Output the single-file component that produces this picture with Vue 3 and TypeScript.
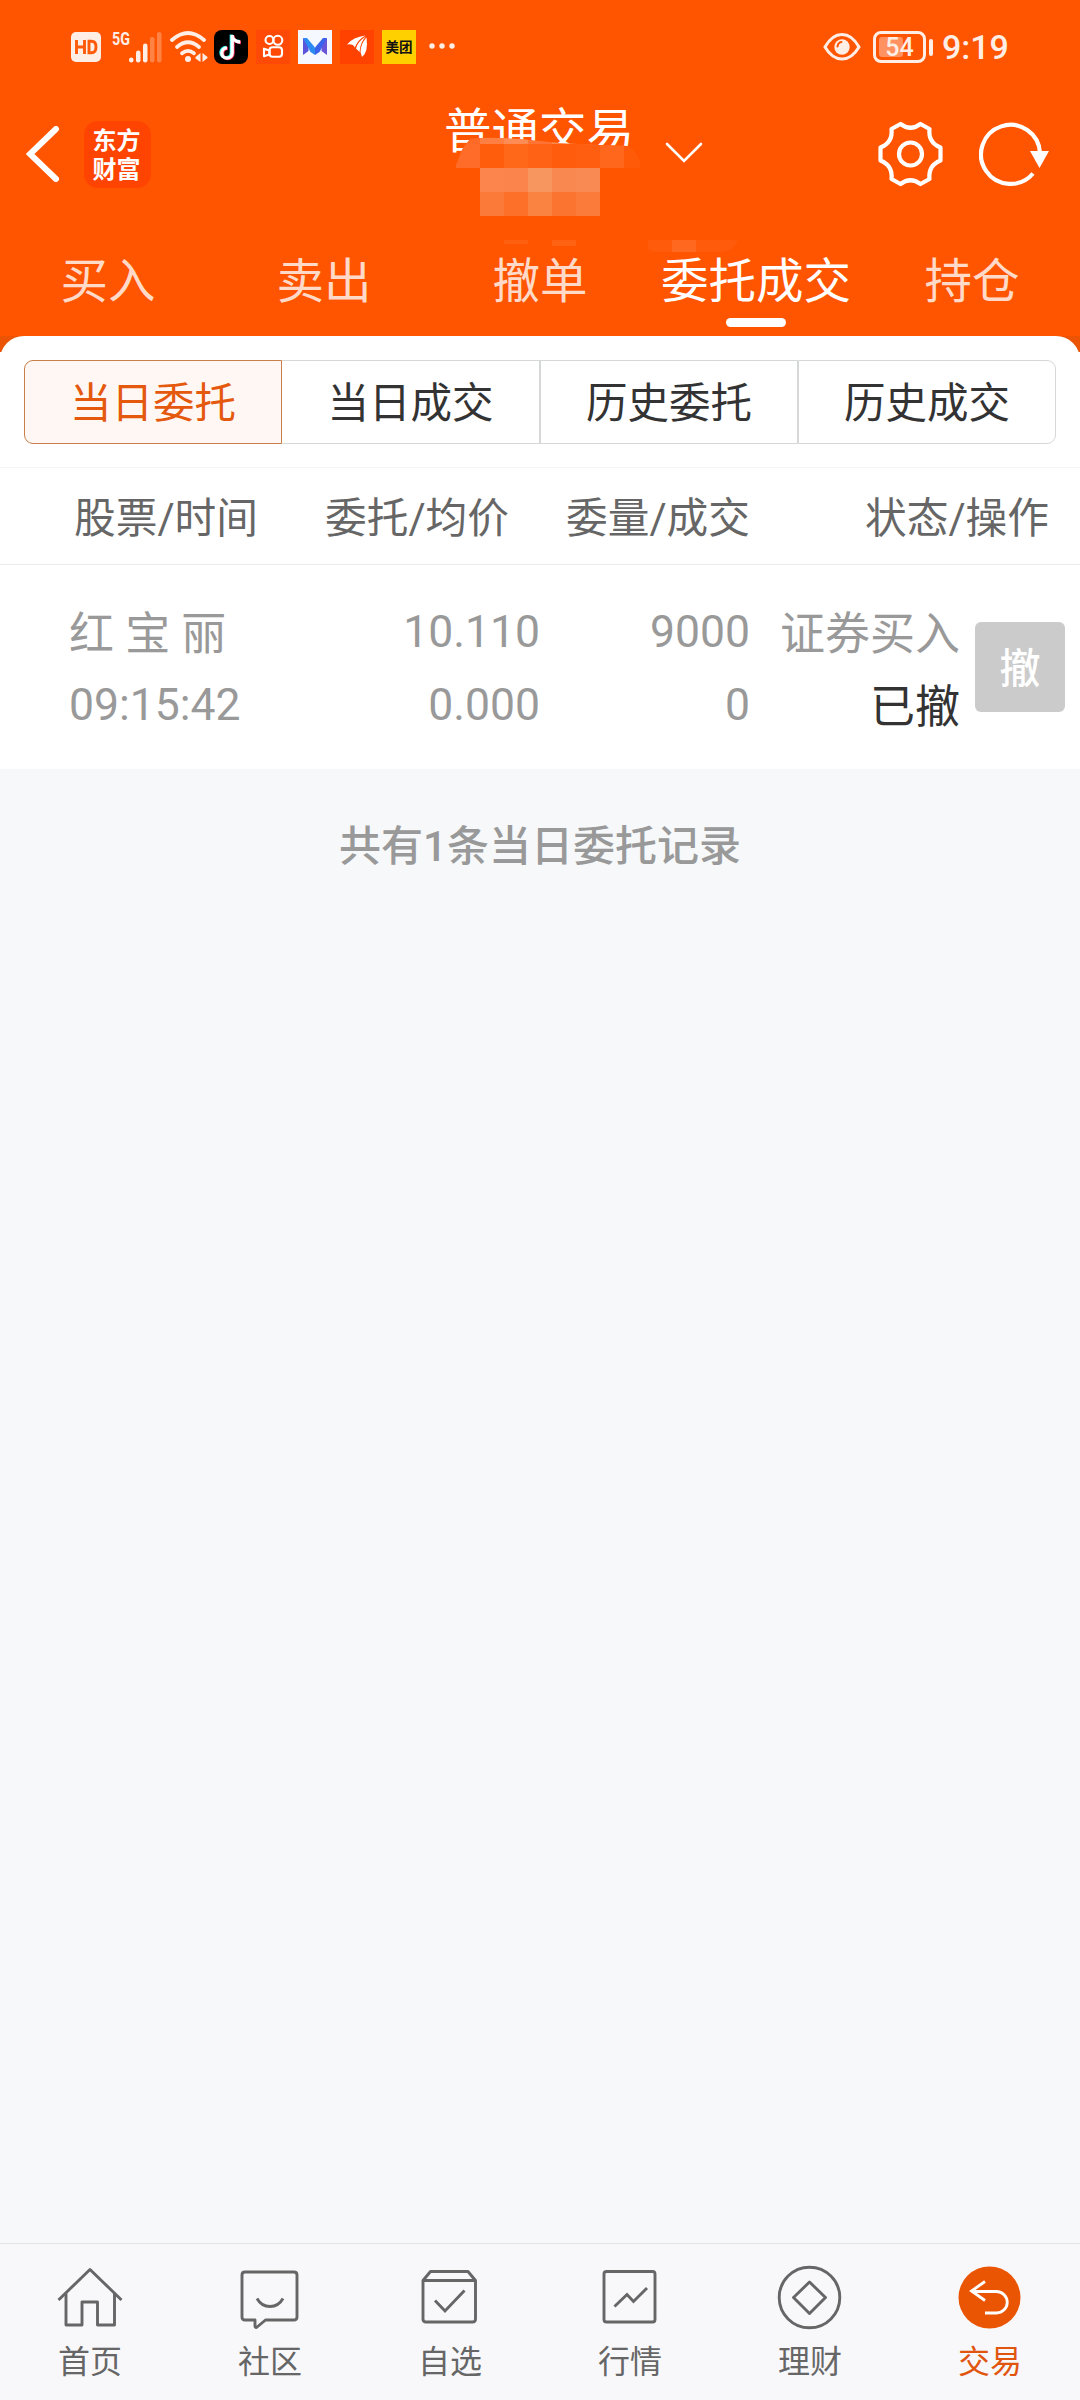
<script setup lang="ts">
import { ref } from 'vue'

interface Order {
  name: string
  time: string
  price: string
  avg: string
  amount: string
  filled: string
  kind: string
  status: string
}

interface Cell {
  x: number
  y: number
  w: number
  h: number
  c: string
}

const tabs: string[] = ['买入', '卖出', '撤单', '委托成交', '持仓']
const activeTab = ref<number>(3)

const segments: string[] = ['当日委托', '当日成交', '历史委托', '历史成交']
const activeSegment = ref<number>(0)

const orders: Order[] = [
  {
    name: '红 宝 丽',
    time: '09:15:42',
    price: '10.110',
    avg: '0.000',
    amount: '9000',
    filled: '0',
    kind: '证券买入',
    status: '已撤',
  },
]

const navItems: string[] = ['首页', '社区', '自选', '行情', '理财', '交易']
const activeNav = ref<number>(5)

// Mosaic that hides the account number under the title
const veil: Cell[] = [
  { x: 16, y: 0, w: 24, h: 24, c: '#ff6a26' },
  { x: 40, y: 0, w: 24, h: 24, c: '#ff7f42' },
  { x: 64, y: 0, w: 24, h: 24, c: '#ff8b55' },
  { x: 88, y: 0, w: 24, h: 24, c: '#ff7434' },
  { x: 112, y: 0, w: 24, h: 24, c: '#ff8a50' },
  { x: 136, y: 0, w: 24, h: 24, c: '#ff7636' },
  { x: 160, y: 0, w: 48, h: 24, c: '#ff6a20' },
  { x: 16, y: 8, w: 24, h: 24, c: '#ff6c29' },
  { x: 40, y: 8, w: 24, h: 24, c: '#ff5c0c' },
  { x: 64, y: 8, w: 24, h: 24, c: '#ff6719' },
  { x: 88, y: 8, w: 24, h: 24, c: '#ff6214' },
  { x: 112, y: 8, w: 24, h: 24, c: '#ff5c0d' },
  { x: 136, y: 8, w: 24, h: 24, c: '#ff5e10' },
  { x: 160, y: 8, w: 24, h: 24, c: '#ff671c' },
  { x: 184, y: 8, w: 24, h: 24, c: '#ff5a08' },
]
const blocks: Cell[] = [
  { x: 40, y: 32, w: 24, h: 24, c: '#fb854c' },
  { x: 64, y: 32, w: 24, h: 24, c: '#fa844c' },
  { x: 88, y: 32, w: 24, h: 24, c: '#f7965f' },
  { x: 112, y: 32, w: 24, h: 24, c: '#f98850' },
  { x: 136, y: 32, w: 24, h: 24, c: '#fa8a54' },
  { x: 40, y: 56, w: 24, h: 24, c: '#fb7a3a' },
  { x: 64, y: 56, w: 24, h: 24, c: '#fc7029' },
  { x: 88, y: 56, w: 24, h: 24, c: '#fb8342' },
  { x: 112, y: 56, w: 24, h: 24, c: '#fc7530' },
  { x: 136, y: 56, w: 24, h: 24, c: '#fb7b3a' },
  { x: 64, y: 104, w: 24, h: 4, c: '#ff6010' },
  { x: 112, y: 104, w: 24, h: 6, c: '#ff6212' },
]
</script>

<template>
  <div class="page">
    <header class="head">
      <div class="status">
        <div class="status-left">
          <svg class="hd" width="30" height="30" viewBox="0 0 30 30">
            <rect width="30" height="30" rx="5" fill="#ffeee6" />
            <path d="M5.500 8v14M13.500 8v14M5.500 15h8M18 9.200v11.600h2.500q4.500 0 4.500-5.800t-4.500-5.800z" fill="none" stroke="#ff5a0a" stroke-width="2.900" />
          </svg>
          <div class="net">
            <span class="gen">5G</span>
            <svg width="34" height="32" viewBox="0 0 34 32">
              <g fill="#ffeee6">
                <rect x="1" y="26.500" width="4.500" height="5" rx="2.200" />
                <rect x="8" y="19.500" width="4.500" height="12" rx="2.200" />
                <rect x="15" y="12.500" width="4.500" height="19" rx="2.200" />
                <rect x="22" y="6" width="4.500" height="25.500" rx="2.200" opacity=".3" />
                <rect x="29" y="1" width="4.500" height="30.500" rx="2.200" opacity=".3" />
              </g>
            </svg>
          </div>
          <svg class="wifi" width="38" height="32" viewBox="0 0 38 32">
            <g fill="none" stroke="#ffeee6" stroke-width="3.800" stroke-linecap="round">
              <path d="M2 9Q18 -5 34 9" />
              <path d="M7 16Q18 6.500 29 16" />
              <path d="M12 22.300Q18 17.500 24 22.300" />
            </g>
            <circle cx="18" cy="28" r="3" fill="#ffeee6" />
            <path d="M30.500 22v9l-5-3.500v-1.500zM32.500 22v9l5-4v-1z" fill="#ffeee6" />
          </svg>
          <svg class="app" width="34" height="34" viewBox="0 0 34 34">
            <rect width="34" height="34" rx="8" fill="#000" />
            <g fill="none" stroke-width="3.300">
              <path d="M17.300 4.500v18a5.200 5.200 0 1 1-5.200-5.200M17.300 5.500q1 5.500 8 6" stroke="#25f4ee" />
              <path d="M19 5.500v18a5.200 5.200 0 1 1-5.200-5.200M19 6.500q1 5.500 8 6" stroke="#fe2c55" />
              <path d="M18.200 5v18a5.200 5.200 0 1 1-5.200-5.200M18.200 6q1 5.500 8 6" stroke="#fff" />
            </g>
          </svg>
          <svg class="app" width="34" height="34" viewBox="0 0 34 34">
            <rect width="34" height="34" fill="#ff4906" />
            <g fill="none" stroke="#fff" stroke-width="2.100">
              <circle cx="13.500" cy="10" r="4" />
              <circle cx="21.800" cy="10.300" r="4.500" />
              <rect x="13.500" y="17.300" width="12.500" height="9.500" rx="3" />
              <path d="M13.500 20.500l-5.500-1.800v7.500l5.500-1.800z" stroke-linejoin="round" />
            </g>
          </svg>
          <svg class="app" width="34" height="34" viewBox="0 0 34 34">
            <rect width="34" height="34" fill="#f5f8ff" />
            <path d="M5 8l5.500 4v9L5 25z" fill="#5a54dc" />
            <path d="M29 8l-5.500 4v9l5.500 4z" fill="#6a54d8" />
            <path d="M5 8h4l8 9.500V25L12.500 22z" fill="#2c8bf2" />
            <path d="M29 8h-4l-8 9.500V25l4.500-3z" fill="#3a62ea" />
          </svg>
          <svg class="app" width="34" height="34" viewBox="0 0 34 34">
            <rect width="34" height="34" fill="#ff4200" />
            <path d="M7 14.500Q13 7 25.500 5.500 18 9.500 14.800 17.500 13 13.500 7 14.500z" fill="#fff" />
            <path d="M26 6.500Q18 11 16 18.500L19.500 22Q20 12.500 26 6.500z" fill="#fff" />
            <path d="M26.500 7.500Q20.500 14 20.500 22L22 27Q28.500 22 26.500 7.500z" fill="#fff" />
          </svg>
          <div class="meituan">美团</div>
          <svg class="dots" width="26" height="6" viewBox="0 0 26 6">
            <g fill="#ffeee6">
              <circle cx="3" cy="3" r="2.700" />
              <circle cx="13" cy="3" r="2.700" />
              <circle cx="23" cy="3" r="2.700" />
            </g>
          </svg>
        </div>
        <div class="status-right">
          <svg width="38" height="30" viewBox="0 0 38 30">
            <path d="M2 15Q9 2.500 19 2.500T36 15Q29 27 19 27T2 15z" fill="none" stroke="#ffeee6" stroke-width="3" />
            <circle cx="19" cy="15" r="7.700" fill="#ffeee6" />
            <path d="M14.500 14.500q.5-4 4-4.500" fill="none" stroke="#ff5500" stroke-width="2" stroke-linecap="round" />
          </svg>
          <div class="battery"><span class="level"></span><span class="pct">54</span></div>
          <span class="nub"></span>
          <span class="clock">9:19</span>
        </div>
      </div>

      <div class="bar">
        <div class="bar-left">
          <svg width="36" height="56" viewBox="0 0 36 56">
            <path d="M30 3L4 28l26 25" fill="none" stroke="#fff" stroke-width="6" stroke-linecap="round" />
          </svg>
          <div class="logo">东方<br />财富</div>
        </div>
        <div class="title">
          <span class="title-text">普通交易</span>
          <svg class="veil" width="300" height="120" viewBox="0 0 300 120">
            <defs>
              <clipPath id="veil-shape">
                <path d="M14 32Q18 26 20 19T30 3Q40 1 62 2 82 3 90 4L120 7 160 9 188 10Q192 12 196 18T201 32z" />
              </clipPath>
            </defs>
            <g clip-path="url(#veil-shape)">
              <rect v-for="(b, i) in veil" :key="i" :x="b.x" :y="b.y" :width="b.w" :height="b.h" :fill="b.c" />
            </g>
            <rect x="16" y="32" width="190" height="72" fill="#ff5500" />
            <rect v-for="(b, i) in blocks" :key="'b' + i" :x="b.x" :y="b.y" :width="b.w" :height="b.h" :fill="b.c" />
            <path d="M208 104h90q-4 11-16 12h-60q-14 0-14-4z" fill="#ff5b0a" />
            <rect x="232" y="104" width="24" height="12" fill="#ff691f" />
          </svg>
        </div>
        <svg class="caret" width="38" height="22" viewBox="0 0 38 22">
          <path d="M2 2l17 17L36 2" fill="none" stroke="#fff" stroke-width="2.600" stroke-linecap="round" />
        </svg>
        <div class="bar-right">
          <svg width="68" height="66" viewBox="0 0 68 66">
            <g fill="none" stroke="#fff" stroke-width="4.200" stroke-linejoin="round">
              <path d="M23.500 3Q33.500 10.500 43.500 3L52.500 8Q51 21.500 63.500 26.500V39.500Q51 44.500 52.500 58L43.500 63Q33.500 55.500 23.500 63L14.500 58Q16 44.500 3.500 39.500V26.500Q16 21.500 14.500 8z" />
              <circle cx="33.500" cy="33" r="11.500" />
            </g>
          </svg>
          <svg width="72" height="66" viewBox="0 0 72 66">
            <path d="M54 52.500A29.500 29.500 0 1 1 61 32" fill="none" stroke="#fff" stroke-width="4.200" />
            <path d="M51 30h19l-9.500 17z" fill="#fff" />
          </svg>
        </div>
      </div>

      <nav class="tabs">
        <div v-for="(t, i) in tabs" :key="t" class="tab" :class="{ on: i === activeTab }" @click="activeTab = i">
          <span>{{ t }}</span>
        </div>
      </nav>
    </header>

    <main class="sheet">
      <div class="segments">
        <div v-for="(s, i) in segments" :key="s" class="segment" :class="{ on: i === activeSegment }" @click="activeSegment = i">
          {{ s }}
        </div>
      </div>
      <div class="columns">
        <span class="c1">股票/时间</span>
        <span class="c2">委托/均价</span>
        <span class="c3">委量/成交</span>
        <span class="c4">状态/操作</span>
      </div>
      <div v-for="o in orders" :key="o.time" class="order">
        <div class="o1"><span>{{ o.name }}</span><span class="num">{{ o.time }}</span></div>
        <div class="o2"><span class="num">{{ o.price }}</span><span class="num">{{ o.avg }}</span></div>
        <div class="o3"><span class="num">{{ o.amount }}</span><span class="num">{{ o.filled }}</span></div>
        <div class="o4"><span>{{ o.kind }}</span><span class="dark">{{ o.status }}</span></div>
        <div class="cancel">撤</div>
      </div>
    </main>

    <section class="rest">
      <p class="summary">共有{{ orders.length }}条当日委托记录</p>
    </section>

    <footer class="nav">
      <div v-for="(n, i) in navItems" :key="n" class="item" :class="{ on: i === activeNav }" @click="activeNav = i">
        <svg width="66" height="66" viewBox="0 0 66 66">
          <g v-if="i === 0" fill="none" stroke="#666" stroke-width="2.900" stroke-linejoin="round">
            <path d="M1.500 36L33 5.500 64.500 36" />
            <path d="M9 29.500V61h16V38h15.500v23h17V29.500" />
          </g>
          <g v-else-if="i === 1" fill="none" stroke="#666" stroke-width="2.900" stroke-linejoin="round">
            <path d="M8 8h49q3 0 3 3v42q0 3-3 3H28.500l-9 7.500q-1.500 0-1.500-2V56H8q-3 0-3-3V11q0-3 3-3z" />
            <path d="M20 34.500q4.500 8 13 8t13-8" />
          </g>
          <g v-else-if="i === 2" fill="none" stroke="#666" stroke-width="2.900" stroke-linejoin="round">
            <path d="M6 16.500L13.500 7.500H51l7.500 9V55q0 3-3 3H9q-3 0-3-3zM6 16.500H58.500" />
            <path d="M18 36.500L28 47l19.500-20.500" stroke-linejoin="miter" />
          </g>
          <g v-else-if="i === 3" fill="none" stroke="#666" stroke-width="2.900">
            <rect x="7" y="7.500" width="51" height="50.500" rx="2.500" />
            <path d="M17.500 42.500l12.500-12 6.500 7L50 24" />
          </g>
          <g v-else-if="i === 4" fill="none" stroke="#666" stroke-width="2.900" stroke-linejoin="round">
            <circle cx="32.500" cy="33.500" r="30.300" />
            <path d="M32.500 18L48.500 33.500 32.500 49.500 16.500 33.500z" />
          </g>
          <g v-else fill="none" stroke="#fff" stroke-width="2.800">
            <circle cx="32.500" cy="33.500" r="31" fill="#ea5504" stroke="none" />
            <path d="M28 17.500L14.500 27l13.500 9.500M14.500 27.500h25a10.500 10.500 0 0 1 0 21.500H28" />
          </g>
        </svg>
        <span>{{ n }}</span>
      </div>
    </footer>
  </div>
</template>

<style>
body {
  margin: 0;
  background: #fff;
}
</style>

<style scoped>
.page {
  width: 1080px;
  height: 2400px;
  display: flex;
  flex-direction: column;
  background: #fff;
  font-family: Roboto, 'Noto Sans CJK SC', sans-serif;
  overflow: hidden;
}
.page svg {
  display: block;
  flex: none;
}
.head {
  height: 352px;
  flex: none;
  background: linear-gradient(#ff5500 336px, #ea5404 336px);
}
.status {
  height: 94px;
  box-sizing: border-box;
  padding: 0 71px;
  display: flex;
  justify-content: space-between;
}
.status-left {
  display: flex;
  align-items: center;
}
.net {
  display: flex;
  align-items: flex-start;
  margin: 0 8px 0 11px;
}
.net .gen {
  font: 700 19px/16px 'Roboto', sans-serif;
  width: 23px;
  margin-right: -7px;
  color: #ffeee6;
  transform: scaleX(0.75);
  transform-origin: left;
}
.wifi {
  margin-right: 6px;
}
.app {
  margin-right: 8px;
}
.meituan {
  width: 34px;
  height: 34px;
  background: #ffd000;
  color: #111;
  font: 700 13.500px/33px 'Noto Sans CJK SC', sans-serif;
  text-align: center;
  margin-right: 13px;
}
.dots {
  margin-bottom: 2px;
}
.status-right {
  display: flex;
  align-items: center;
}
.battery {
  position: relative;
  box-sizing: border-box;
  width: 53px;
  height: 32px;
  margin-left: 12px;
  border: 3px solid #ffeee6;
  border-radius: 8px;
}
.level {
  position: absolute;
  left: 3px;
  top: 3px;
  width: 24px;
  height: 20px;
  background: #ff9260;
  border-radius: 3px;
}
.pct {
  position: relative;
  display: block;
  text-align: center;
  font-weight: 500;
  font-size: 25px;
  line-height: 27px;
  color: #ffeee6;
}
.nub {
  width: 4px;
  height: 17px;
  margin-left: 3px;
  border-radius: 2px;
  background: #ffeee6;
}
.clock {
  margin-left: 9px;
  width: 67px;
  font-size: 34px;
  font-weight: 500;
  line-height: 40px;
  color: #ffeee6;
}
.bar {
  position: relative;
  height: 120px;
  box-sizing: border-box;
  display: flex;
  align-items: center;
  justify-content: space-between;
  padding: 0 29px 0 26px;
}
.bar-left,
.bar-right {
  display: flex;
  align-items: center;
}
.logo {
  width: 67px;
  height: 67px;
  box-sizing: border-box;
  padding: 3px 2px 0 0;
  margin-left: 22px;
  border-radius: 14px;
  background: #ff4300;
  color: #fff;
  font: 700 24px/29px 'Noto Sans CJK SC', sans-serif;
  text-align: center;
}
.bar-right {
  gap: 34px;
}
.title {
  position: absolute;
  left: 440px;
  top: 0;
}
.title-text {
  display: block;
  margin: 3px 0 0 4px;
  font-size: 47.500px;
  line-height: 70px;
  color: #fff;
  white-space: nowrap;
}
.veil {
  position: absolute;
  left: 0;
  top: 42px;
}
.caret {
  position: absolute;
  left: 665px;
  top: 48px;
}
.tabs {
  display: flex;
  height: 122px;
}
.tab {
  flex: 1;
  display: flex;
  flex-direction: column;
  align-items: center;
  font-size: 47.500px;
  line-height: 70px;
  padding-top: 33px;
  color: #ffdac8;
  white-space: nowrap;
}
.tab.on {
  color: #fff;
}
.tab.on::after {
  content: '';
  width: 60px;
  height: 9px;
  margin-top: 1px;
  border-radius: 5px;
  background: #fff;
}
.sheet {
  position: relative;
  flex: none;
  height: 433px;
  margin-top: -16px;
  border-radius: 24px 24px 0 0;
  background: #fff;
}
.segments {
  display: flex;
  height: 84px;
  margin: 0 24px;
  padding-top: 24px;
}
.segment {
  width: 258px;
  height: 84px;
  flex: none;
  box-sizing: border-box;
  border: 1px solid #d6d8d8;
  font-size: 41.500px;
  line-height: 86px;
  text-align: center;
  color: #333;
}
.segment.on + .segment {
  border-left: 0;
}
.segment:first-child {
  border-radius: 9px 0 0 9px;
}
.segment:last-child {
  border-radius: 0 9px 9px 0;
}
.segment.on {
  border-color: #c87f4c;
  background: #fff7f4;
  color: #e4590e;
}
.columns {
  display: flex;
  height: 96px;
  margin-top: 23px;
  border-top: 1px solid #f6f6f6;
  border-bottom: 1px solid #ebebeb;
  font-size: 41.700px;
  line-height: 101px;
  color: #666;
  text-align: right;
  white-space: nowrap;
}
.c1 {
  width: 258px;
}
.c2 {
  width: 251px;
}
.c3 {
  width: 241px;
}
.c4 {
  width: 299px;
}
.order {
  display: flex;
  padding-top: 32px;
  font-size: 45px;
  line-height: 73px;
  color: #999;
  white-space: nowrap;
}
.order span {
  display: block;
  height: 73px;
  line-height: 75px;
}
.order .num {
  font-size: 44.500px;
  line-height: 71px;
}
.o1 {
  width: 231px;
  padding-left: 69px;
}
.o2,
.o3,
.o4 {
  text-align: right;
}
.o2 {
  width: 240px;
}
.o3 {
  width: 210px;
}
.o4 {
  width: 210px;
}
.order .dark {
  color: #333;
}
.cancel {
  width: 90px;
  height: 90px;
  margin: 25px 0 0 15px;
  border-radius: 6px;
  background: #cbcbcb;
  color: #fff;
  font-size: 41px;
  font-weight: 500;
  line-height: 94px;
  text-align: center;
}
.rest {
  flex: 1;
  background: #f6f8fa;
}
.summary {
  margin: 48px 0 0;
  font-size: 42px;
  font-weight: 500;
  line-height: 60px;
  text-align: center;
  color: #999;
}
.nav {
  flex: none;
  display: flex;
  height: 156px;
  border-top: 1px solid #e2e4e6;
  background: #f8f8fb;
}
.item {
  flex: 1;
  display: flex;
  flex-direction: column;
  align-items: center;
  padding-top: 20px;
  font-size: 32px;
  line-height: 48px;
  color: #666;
}
.item span {
  margin-top: 8px;
}
.item.on {
  color: #e0560f;
}
</style>
